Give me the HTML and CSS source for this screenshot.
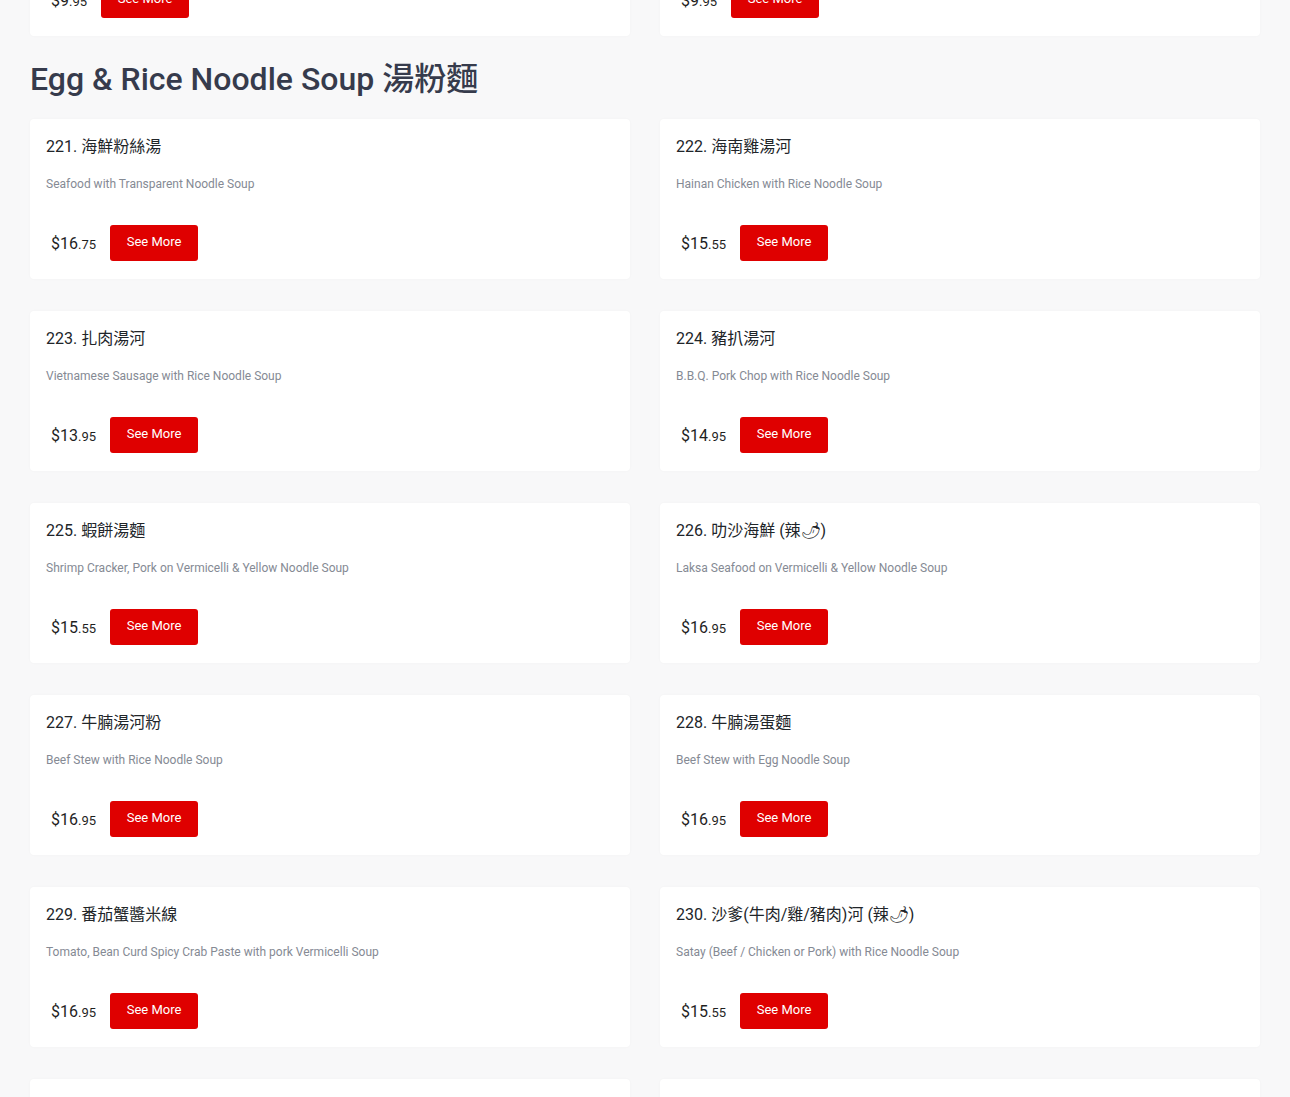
FILE: index.html
```html
<!DOCTYPE html>
<html lang="en">
<head>
<meta charset="utf-8">
<title>Menu</title>
<link rel="stylesheet" href="styles.css">
</head>
<body>
<main class="menu">
  <section class="grid grid-prev">
    <div class="card">
      <h3 class="item-title">219. 湯河</h3>
      <p class="item-desc">Rice Noodle Soup</p>
      <div class="item-foot"><span class="price">$9<small>.95</small></span><button class="btn">See More</button></div>
    </div>
    <div class="card">
      <h3 class="item-title">220. 湯麵</h3>
      <p class="item-desc">Egg Noodle Soup</p>
      <div class="item-foot"><span class="price">$9<small>.95</small></span><button class="btn">See More</button></div>
    </div>
  </section>

  <h2 class="section-title">Egg &amp; Rice Noodle Soup 湯粉麵</h2>

  <section class="grid">
    <div class="card">
      <h3 class="item-title">221. 海鮮粉絲湯</h3>
      <p class="item-desc">Seafood with Transparent Noodle Soup</p>
      <div class="item-foot"><span class="price">$16<small>.75</small></span><button class="btn">See More</button></div>
    </div>
    <div class="card">
      <h3 class="item-title">222. 海南雞湯河</h3>
      <p class="item-desc">Hainan Chicken with Rice Noodle Soup</p>
      <div class="item-foot"><span class="price">$15<small>.55</small></span><button class="btn">See More</button></div>
    </div>
    <div class="card">
      <h3 class="item-title">223. 扎肉湯河</h3>
      <p class="item-desc">Vietnamese Sausage with Rice Noodle Soup</p>
      <div class="item-foot"><span class="price">$13<small>.95</small></span><button class="btn">See More</button></div>
    </div>
    <div class="card">
      <h3 class="item-title">224. 豬扒湯河</h3>
      <p class="item-desc">B.B.Q. Pork Chop with Rice Noodle Soup</p>
      <div class="item-foot"><span class="price">$14<small>.95</small></span><button class="btn">See More</button></div>
    </div>
    <div class="card">
      <h3 class="item-title">225. 蝦餅湯麵</h3>
      <p class="item-desc">Shrimp Cracker, Pork on Vermicelli &amp; Yellow Noodle Soup</p>
      <div class="item-foot"><span class="price">$15<small>.55</small></span><button class="btn">See More</button></div>
    </div>
    <div class="card">
      <h3 class="item-title">226. 叻沙海鮮 (辣🌶)</h3>
      <p class="item-desc">Laksa Seafood on Vermicelli &amp; Yellow Noodle Soup</p>
      <div class="item-foot"><span class="price">$16<small>.95</small></span><button class="btn">See More</button></div>
    </div>
    <div class="card">
      <h3 class="item-title">227. 牛腩湯河粉</h3>
      <p class="item-desc">Beef Stew with Rice Noodle Soup</p>
      <div class="item-foot"><span class="price">$16<small>.95</small></span><button class="btn">See More</button></div>
    </div>
    <div class="card">
      <h3 class="item-title">228. 牛腩湯蛋麵</h3>
      <p class="item-desc">Beef Stew with Egg Noodle Soup</p>
      <div class="item-foot"><span class="price">$16<small>.95</small></span><button class="btn">See More</button></div>
    </div>
    <div class="card">
      <h3 class="item-title">229. 番茄蟹醬米線</h3>
      <p class="item-desc">Tomato, Bean Curd Spicy Crab Paste with pork Vermicelli Soup</p>
      <div class="item-foot"><span class="price">$16<small>.95</small></span><button class="btn">See More</button></div>
    </div>
    <div class="card">
      <h3 class="item-title">230. 沙爹(牛肉/雞/豬肉)河 (辣🌶)</h3>
      <p class="item-desc">Satay (Beef / Chicken or Pork) with Rice Noodle Soup</p>
      <div class="item-foot"><span class="price">$15<small>.55</small></span><button class="btn">See More</button></div>
    </div>
    <div class="card">
      <h3 class="item-title">231. 湯河</h3>
      <p class="item-desc">Rice Noodle Soup</p>
      <div class="item-foot"><span class="price">$15<small>.55</small></span><button class="btn">See More</button></div>
    </div>
    <div class="card">
      <h3 class="item-title">232. 湯麵</h3>
      <p class="item-desc">Egg Noodle Soup</p>
      <div class="item-foot"><span class="price">$15<small>.55</small></span><button class="btn">See More</button></div>
    </div>
  </section>
</main>
</body>
</html>
```

FILE: styles.css
```css
* { box-sizing: border-box; }

html, body {
  margin: 0;
  padding: 0;
  background: #f8f8f9;
  font-family: Roboto, "Noto Sans CJK TC", "Liberation Sans", sans-serif;
  color: #212529;
}

body { overflow: hidden; height: 1097px; }

.menu {
  padding: 0 30px;
}

.grid {
  display: grid;
  grid-template-columns: 600px 600px;
  column-gap: 30px;
  row-gap: 32px;
}

.grid-prev {
  margin-top: -124px;
}

.card {
  background: #ffffff;
  border-radius: 4px;
  box-shadow: 0 0 3px rgba(0, 0, 0, 0.03);
  height: 160px;
  padding: 16px;
  display: flex;
  flex-direction: column;
}

.section-title {
  margin: 24px 0 21px;
  font-size: 32px;
  line-height: 38px;
  font-weight: 500;
  color: #363b4c;
}

.item-title {
  margin: 0;
  font-size: 16px;
  line-height: 22px;
  font-weight: 400;
  color: #212529;
  padding-top: 1px;
}

.item-desc {
  margin: 17px 0 0;
  font-size: 12px;
  line-height: 18px;
  color: #858a94;
}

.item-foot {
  margin-top: 32px;
  display: flex;
  align-items: center;
  gap: 14px;
}

.price {
  padding-left: 5px;
  font-size: 16px;
  color: #1f1f1f;
}

.price small {
  font-size: 13px;
}

.btn {
  width: 88px;
  height: 36px;
  border: none;
  border-radius: 3px;
  background: #df0000;
  color: #ffffff;
  font-family: Roboto, "Liberation Sans", sans-serif;
  font-size: 13px;
  line-height: 34px;
  padding: 0 0 2px;
  cursor: pointer;
}
```
